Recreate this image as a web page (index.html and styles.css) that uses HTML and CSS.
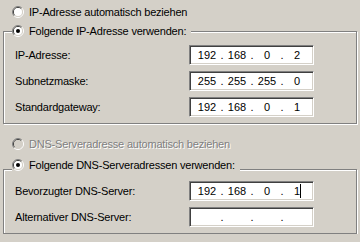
FILE: index.html
```html
<!DOCTYPE html>
<html lang="de">
<head>
  <meta charset="UTF-8" />
  <title>TCP/IP-Eigenschaften</title>
  <link rel="stylesheet" href="styles.css">
</head>
<body>
  <div class="dialog">
    <label class="option">
      <svg class="radio" viewBox="0 0 12 12"><path d="M2.1 9.9A5.5 5.5 0 0 1 9.9 2.1" fill="none" stroke="#808080"/><path d="M9.9 2.1A5.5 5.5 0 0 1 2.1 9.9" fill="none" stroke="#fff"/><path d="M2.8 9.2A4.5 4.5 0 0 1 9.2 2.8" fill="none" stroke="#404040"/><path d="M9.2 2.8A4.5 4.5 0 0 1 2.8 9.2" fill="none" stroke="#d4d0c8"/><circle cx="6" cy="6" r="4" fill="#fff"/></svg>
      <span>IP-Adresse automatisch beziehen</span>
    </label>

    <fieldset class="group">
      <legend class="option">
        <svg class="radio" viewBox="0 0 12 12"><path d="M2.1 9.9A5.5 5.5 0 0 1 9.9 2.1" fill="none" stroke="#808080"/><path d="M9.9 2.1A5.5 5.5 0 0 1 2.1 9.9" fill="none" stroke="#fff"/><path d="M2.8 9.2A4.5 4.5 0 0 1 9.2 2.8" fill="none" stroke="#404040"/><path d="M9.2 2.8A4.5 4.5 0 0 1 2.8 9.2" fill="none" stroke="#d4d0c8"/><circle cx="6" cy="6" r="4" fill="#fff"/><circle cx="6" cy="6" r="2" fill="#000"/></svg>
        <span>Folgende IP-Adresse verwenden:</span>
      </legend>
      <div class="rows">
        <span class="label">IP-Adresse:</span>
        <div class="ip"><span class="seg">192</span><span class="dot">.</span><span class="seg">168</span><span class="dot">.</span><span class="seg">0</span><span class="dot">.</span><span class="seg">2</span></div>
        <span class="label">Subnetzmaske:</span>
        <div class="ip"><span class="seg">255</span><span class="dot">.</span><span class="seg">255</span><span class="dot">.</span><span class="seg">255</span><span class="dot">.</span><span class="seg">0</span></div>
        <span class="label">Standardgateway:</span>
        <div class="ip"><span class="seg">192</span><span class="dot">.</span><span class="seg">168</span><span class="dot">.</span><span class="seg">0</span><span class="dot">.</span><span class="seg">1</span></div>
      </div>
    </fieldset>

    <label class="option disabled">
      <svg class="radio" viewBox="0 0 12 12"><path d="M2.1 9.9A5.5 5.5 0 0 1 9.9 2.1" fill="none" stroke="#808080"/><path d="M9.9 2.1A5.5 5.5 0 0 1 2.1 9.9" fill="none" stroke="#fff"/><path d="M2.8 9.2A4.5 4.5 0 0 1 9.2 2.8" fill="none" stroke="#404040"/><path d="M9.2 2.8A4.5 4.5 0 0 1 2.8 9.2" fill="none" stroke="#d4d0c8"/><circle cx="6" cy="6" r="4" fill="#d4d0c8"/></svg>
      <span>DNS-Serveradresse automatisch beziehen</span>
    </label>

    <fieldset class="group group-dns">
      <legend class="option">
        <svg class="radio" viewBox="0 0 12 12"><path d="M2.1 9.9A5.5 5.5 0 0 1 9.9 2.1" fill="none" stroke="#808080"/><path d="M9.9 2.1A5.5 5.5 0 0 1 2.1 9.9" fill="none" stroke="#fff"/><path d="M2.8 9.2A4.5 4.5 0 0 1 9.2 2.8" fill="none" stroke="#404040"/><path d="M9.2 2.8A4.5 4.5 0 0 1 2.8 9.2" fill="none" stroke="#d4d0c8"/><circle cx="6" cy="6" r="4" fill="#fff"/><circle cx="6" cy="6" r="2" fill="#000"/></svg>
        <span>Folgende DNS-Serveradressen verwenden:</span>
      </legend>
      <div class="rows">
        <span class="label">Bevorzugter DNS-Server:</span>
        <div class="ip"><span class="seg">192</span><span class="dot">.</span><span class="seg">168</span><span class="dot">.</span><span class="seg">0</span><span class="dot">.</span><span class="seg">1<span class="caret"></span></span></div>
        <span class="label">Alternativer DNS-Server:</span>
        <div class="ip"><span class="seg"></span><span class="dot">.</span><span class="seg"></span><span class="dot">.</span><span class="seg"></span><span class="dot">.</span><span class="seg"></span></div>
      </div>
    </fieldset>
  </div>
</body>
</html>
```

FILE: styles.css
```css
body {
  margin: 0;
  background-color: #d4d0c8;
  font-family: "Liberation Sans", Arial, sans-serif;
  font-size: 11px;
  letter-spacing: -0.2px;
  color: #000;
}

.dialog {
  padding-top: 6px;
}

.option {
  display: flex;
  align-items: center;
  gap: 5px;
  height: 12px;
  line-height: 12px;
  margin-left: 12px;
  white-space: nowrap;
}

.radio {
  width: 12px;
  height: 12px;
  flex: none;
}

.disabled {
  margin-top: 14px;
}

.disabled span {
  color: #808080;
  text-shadow: 1px 1px 0 #fff;
}

.group {
  margin: 7px 3px 0;
  padding: 0;
  min-width: 0;
  border: 1px solid #808080;
  box-shadow: 1px 1px 0 #fff, inset 1px 1px 0 #fff;
}

.group legend {
  margin-left: 8px;
  padding: 0 5px 0 0;
  background-color: #d4d0c8;
}

.group-dns {
  margin-top: 9px;
}

.group-dns legend {
  padding-bottom: 9px;
  align-items: flex-start;
  height: 21px;
  box-sizing: border-box;
}

.rows {
  display: grid;
  grid-template-columns: 174px 125px;
  grid-auto-rows: 20px;
  row-gap: 6px;
  align-items: center;
  padding: 8px 0 6px 11px;
}

.group-dns .rows {
  padding-top: 1px;
}

.label {
  white-space: nowrap;
}

.ip {
  box-sizing: border-box;
  width: 125px;
  height: 20px;
  display: flex;
  align-items: center;
  padding-left: 4px;
  background-color: #fff;
  border: 1px solid;
  border-color: #808080 #fff #fff #808080;
  box-shadow: inset 1px 1px 0 #404040, inset -1px -1px 0 #d4d0c8;
  letter-spacing: 0;
}

.seg {
  width: 26px;
  text-align: center;
}

.dot {
  width: 4px;
  text-align: center;
}

.caret {
  display: inline-block;
  width: 1px;
  height: 14px;
  margin-right: -1px;
  vertical-align: -3px;
  background-color: #000;
}
```
